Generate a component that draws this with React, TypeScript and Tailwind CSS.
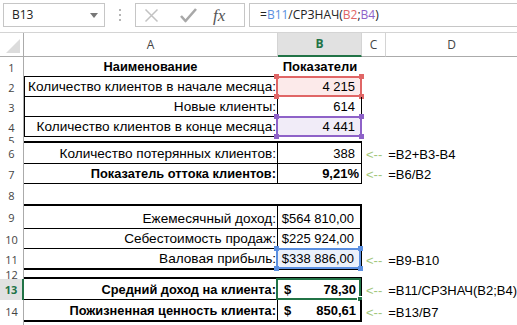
import React from "react";

type Hl = "red" | "purple" | "blue";

type SheetRow = {
  n: string;
  h: string;
  a?: string;
  b?: React.ReactNode;
  acc?: [string, string];
  note?: string;
  aCls: string;
  bCls: string;
  bold?: boolean;
  center?: boolean;
  tight?: boolean;
  hl?: Hl;
  sel?: boolean;
};

const rows: SheetRow[] = [
  { n: "1", h: "h-[20px]", a: "Наименование", b: "Показатели", bold: true, center: true, aCls: "border-b border-black", bCls: "border-b border-black" },
  { n: "2", h: "h-[20px]", a: "Количество клиентов в начале месяца:", b: "4 215", hl: "red", aCls: "border-l border-r border-b border-black", bCls: "border-r border-b border-black" },
  { n: "3", h: "h-[20px]", a: "Новые клиенты:", b: "614", aCls: "border-l border-r border-b border-black", bCls: "border-r border-b border-black" },
  { n: "4", h: "h-[20px]", a: "Количество клиентов в конце месяца:", b: "4 441", hl: "purple", aCls: "border-l border-r border-b border-black", bCls: "border-r border-b border-black" },
  { n: "5", h: "h-[6px]", aCls: "border-b-2 border-black", bCls: "border-b-2 border-black" },
  { n: "6", h: "h-[21px]", a: "Количество потерянных клиентов:", b: "388", note: "=B2+B3-B4", aCls: "border-r border-b border-black", bCls: "border-r border-b border-black" },
  { n: "7", h: "h-[20px]", a: "Показатель оттока клиентов:", b: "9,21%", bold: true, tight: true, note: "=B6/B2", aCls: "border-r border-b border-black", bCls: "border-r border-b border-black" },
  { n: "8", h: "h-[22px]", aCls: "border-b-2 border-black", bCls: "border-b-2 border-black" },
  { n: "9", h: "h-[23px]", a: "Ежемесячный доход:", b: "$564 810,00", aCls: "border-r border-b border-black", bCls: "border-r-2 border-b border-black" },
  { n: "10", h: "h-[20px]", a: "Себестоимость продаж:", b: "$225 924,00", aCls: "border-r border-b border-black", bCls: "border-r-2 border-b border-black" },
  { n: "11", h: "h-[21px]", a: "Валовая прибыль:", b: "$338 886,00", hl: "blue", note: "=B9-B10", aCls: "border-r border-b-2 border-black", bCls: "border-r-2 border-b-2 border-black" },
  { n: "12", h: "h-[9px]", aCls: "border-b-2 border-black", bCls: "border-b-2 border-black" },
  { n: "13", h: "h-[21px]", a: "Средний доход на клиента:", acc: ["$", "78,30"], bold: true, sel: true, note: "=B11/СРЗНАЧ(B2;B4)", aCls: "border-r border-b border-black", bCls: "border-r-2 border-b border-black" },
  { n: "14", h: "h-[22px]", a: "Пожизненная ценность клиента:", acc: ["$", "850,61"], bold: true, note: "=B13/B7", aCls: "border-r border-b-2 border-black", bCls: "border-r-2 border-b-2 border-black" },
  { n: "", h: "h-[20px]", aCls: "", bCls: "" },
];

const hlStyles: Record<Hl, { box: string; dot: string }> = {
  red: { box: "border-[#e06666] bg-[#fceaea]", dot: "bg-[#e06666]" },
  purple: { box: "border-[#8e62c8] bg-[#f1ecf8]", dot: "bg-[#8e62c8]" },
  blue: { box: "border-[#5b8fe0] bg-[#ebf1fb]", dot: "bg-[#5b8fe0]" },
};

const Highlight = ({ kind }: { kind: Hl }) => {
  const s = hlStyles[kind];
  return (
    <div className={`absolute -left-[2px] -right-[1px] -top-[1px] -bottom-[1px] border-2 ${s.box}`}>
      <span className={`absolute -left-[4px] -top-[4px] w-[5px] h-[5px] ${s.dot}`} />
      <span className={`absolute -right-[4px] -top-[4px] w-[5px] h-[5px] ${s.dot}`} />
      <span className={`absolute -left-[4px] -bottom-[4px] w-[5px] h-[5px] ${s.dot}`} />
      <span className={`absolute -right-[4px] -bottom-[4px] w-[5px] h-[5px] ${s.dot}`} />
    </div>
  );
};

const FormulaBar = () => (
  <div className="h-[32px] flex items-start pt-[3px] bg-white font-['Open_Sans',sans-serif] text-[12px] text-[#222]">
    <div className="ml-[3px] w-[102px] h-[24px] border border-[#c6c6c6] flex items-center justify-between pl-[8px] pr-[6px]">
      <span>B13</span>
      <svg width="8" height="5" viewBox="0 0 8 5"><path d="M0 0h8L4 5z" fill="#777" /></svg>
    </div>
    <div className="w-[30px] h-[24px] flex flex-col items-center justify-center gap-[3px]">
      <span className="w-[2px] h-[2px] bg-[#b5b5b5]" />
      <span className="w-[2px] h-[2px] bg-[#b5b5b5]" />
      <span className="w-[2px] h-[2px] bg-[#b5b5b5]" />
    </div>
    <div className="w-[110px] h-[24px] border border-[#c6c6c6] flex items-center">
      <svg className="ml-[8px]" width="15" height="15" viewBox="0 0 15 15">
        <path d="M1.5 1.5L13.5 13.5M13.5 1.5L1.5 13.5" stroke="#c2c2c2" strokeWidth="1.5" />
      </svg>
      <svg className="ml-[21px]" width="17" height="15" viewBox="0 0 17 15">
        <path d="M1 8L5.5 13L16 1" stroke="#a8a8a8" strokeWidth="2.6" fill="none" strokeLinejoin="round" />
      </svg>
      <span className="ml-[16px] font-['Liberation_Serif',serif] italic text-[17px] text-[#555] leading-none">fx</span>
    </div>
    <div className="ml-[4px] flex-1 h-[24px] border border-[#c6c6c6] border-r-0 flex items-center pl-[10px] text-[12px]">
      <span>=</span>
      <span className="text-[#5b8fe0]">B11</span>
      <span>/СРЗНАЧ(</span>
      <span className="text-[#e06666]">B2</span>
      <span>;</span>
      <span className="text-[#8e62c8]">B4</span>
      <span>)</span>
    </div>
  </div>
);

const ColumnHeaders = () => (
  <div className="h-[25px] flex border-t border-[#d4d4d4] font-['Open_Sans',sans-serif] text-[12px] text-[#444]">
    <div className="w-[24px] border-r border-b border-[#ababab] flex items-end justify-end p-[3px]">
      <svg width="14" height="14" viewBox="0 0 14 14"><path d="M14 0V14H0z" fill="#dcdcdc" /></svg>
    </div>
    <div className="w-[254px] border-r border-b border-r-[#d4d4d4] border-b-[#ababab] flex items-center justify-center">A</div>
    <div className="w-[84px] bg-[#e1e1e1] border-r border-b-2 border-r-[#d4d4d4] border-b-[#217346] flex items-center justify-center text-[#217346] font-bold">B</div>
    <div className="w-[24px] border-r border-b border-r-[#d4d4d4] border-b-[#ababab] flex items-center justify-center">C</div>
    <div className="flex-1 border-b border-[#ababab] flex items-center justify-center">D</div>
  </div>
);

const SheetRowView = ({ r }: { r: SheetRow }) => (
  <div className={`flex ${r.h}`}>
    <div
      className={`w-[24px] shrink-0 flex items-center justify-center overflow-hidden font-['Open_Sans',sans-serif] text-[11px] leading-none ${
        r.sel ? "bg-[#e1e1e1] border-r-2 border-[#217346] text-[#217346] font-bold" : "border-r border-[#ababab] text-[#444]"
      }`}
    >
      {r.n}
    </div>
    <div
      className={`w-[254px] shrink-0 flex items-end pb-[1px] pr-[1px] overflow-hidden whitespace-nowrap ${r.center ? "justify-center" : "justify-end"} ${
        r.bold ? "font-bold text-[12.8px]" : "text-[13.6px]"
      } ${r.aCls}`}
    >
      {r.a}
    </div>
    <div className={`w-[84px] shrink-0 relative flex items-end pb-[1px] ${r.bold ? "font-bold" : ""} ${r.bCls}`}>
      {r.hl && <Highlight kind={r.hl} />}
      {r.sel && (
        <div className="absolute -left-[2px] -right-[1px] -top-[1px] -bottom-[1px] border-2 border-[#217346]">
          <span className="absolute -right-[4px] -bottom-[4px] w-[6px] h-[6px] bg-[#217346] border border-white" />
        </div>
      )}
      {r.acc ? (
        <div className="relative flex-1 flex justify-between pl-[6px] pr-[4px]">
          <span>{r.acc[0]}</span>
          <span>{r.acc[1]}</span>
        </div>
      ) : (
        <div className={`relative flex-1 flex ${r.center ? "justify-center" : r.tight ? "justify-end pr-[2px]" : "justify-end pr-[6px]"}`}>{r.b}</div>
      )}
    </div>
    <div className="flex-1 flex items-end pb-[1px] pl-[4px] whitespace-nowrap">
      {r.note && (
        <>
          <span className="text-[#a3c77c]">&lt;--</span>
          <span className="ml-[6px]">{r.note}</span>
        </>
      )}
    </div>
  </div>
);

export default function App() {
  return (
    <div className="w-[517px] h-[325px] overflow-hidden bg-white">
      <FormulaBar />
      <ColumnHeaders />
      <div className="font-['Liberation_Sans',sans-serif] text-[13px] leading-[16px] text-black">
        {rows.map((r, i) => (
          <SheetRowView key={i} r={r} />
        ))}
      </div>
    </div>
  );
}
